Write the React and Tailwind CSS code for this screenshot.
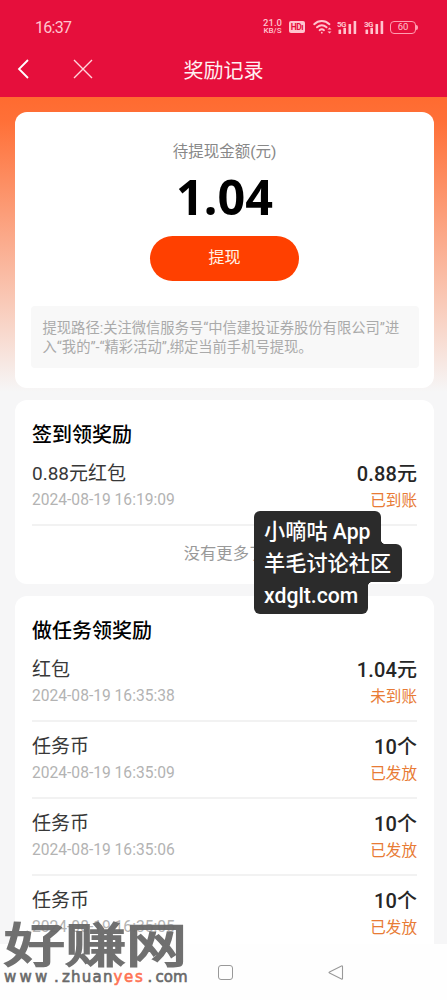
import React from "react";

const taskRecords = [
  { id: 1, name: "红包", time: "2024-08-19 16:35:38", amount: "1.04元", status: "未到账" },
  { id: 2, name: "任务币", time: "2024-08-19 16:35:09", amount: "10个", status: "已发放" },
  { id: 3, name: "任务币", time: "2024-08-19 16:35:06", amount: "10个", status: "已发放" },
  { id: 4, name: "任务币", time: "2024-08-19 16:35:05", amount: "10个", status: "已发放" },
];

function Signal({ label }) {
  return (
    <svg width="20" height="17" viewBox="0 0 20 17" fill="currentColor">
      <text x="0" y="7.500" fontSize="8" fontWeight="700" fontFamily="Roboto, sans-serif" textLength="9.500">
        {label}
      </text>
      <rect x="1.5" y="10.5" width="2.6" height="4.5" rx="0.6" />
      <rect x="6.4" y="8.8" width="2.6" height="6.2" rx="0.6" />
      <rect x="11.5" y="5" width="2.6" height="10" rx="0.6" />
      <rect x="16.6" y="2" width="2.6" height="13" rx="0.6" />
    </svg>
  );
}

function StatusBar() {
  return (
    <div className="flex h-[54px] items-center pl-[35px] pr-[29px] text-[#ffc4ce]">
      <span className="pt-[1px] text-[16px] leading-none tracking-[-0.7px]">16:37</span>
      <div className="ml-auto flex items-center">
        <div className="mr-[7px] flex w-[19px] flex-col items-center font-medium leading-none">
          <span className="text-[9.5px] leading-[8px]">21.0</span>
          <span className="text-[8px] leading-[8px]">KB/S</span>
        </div>
        <div className="mr-[8px] flex h-[12px] w-[16px] items-center justify-center rounded-[2px] bg-[#ffc4ce] text-[8.5px] font-bold leading-none tracking-[-0.5px] text-[#e60f3c]">
          HDı
        </div>
        <svg className="mr-[5px]" width="19" height="16" viewBox="0 0 19 16" fill="none" stroke="currentColor" strokeWidth="1.9" strokeLinecap="round">
          <path d="M1.2 5.2c4.4-4.2 10.800-4.200 15.200 0" />
          <path d="M4 8.300c2.900-2.600 6.700-2.600 9.600 0" />
          <path d="M6.600 11.200c1.400-1.200 3-1.200 4.400 0" />
          <circle cx="8.800" cy="13.700" r="0.900" fill="currentColor" stroke="none" />
          <path d="M16.500 8.500l2 2h-4zM16.500 14.500l2-2h-4z" fill="currentColor" stroke="none" />
        </svg>
        <div className="mr-[7px]">
          <Signal label="5G" />
        </div>
        <div className="mr-[6px]">
          <Signal label="3G" />
        </div>
        <div className="flex h-[13px] w-[26px] items-center justify-center rounded-[4px] border border-[#ff9db0] text-[9.5px] leading-none">
          60
        </div>
        <div className="h-[5px] w-[2px] rounded-r bg-[#ff9db0]" />
      </div>
    </div>
  );
}

function Header() {
  return (
    <header className="h-[97px] bg-[#e60f3c]">
      <StatusBar />
      <div className="grid h-[30px] grid-cols-[1fr_auto_1fr] items-center pl-[16px] text-white">
        <div className="flex items-center">
          <svg width="14" height="20" viewBox="0 0 14 20" fill="none" stroke="currentColor" strokeWidth="1.8">
            <path d="M12 1L3 10l9 9" />
          </svg>
          <svg className="ml-[43px] text-[#ffd5dc]" width="20" height="20" viewBox="0 0 20 20" fill="none" stroke="currentColor" strokeWidth="1.4">
            <path d="M1 1l18 18M19 1L1 19" />
          </svg>
        </div>
        <h1 className="-ml-[16px] pt-[3px] text-[20px] leading-none text-[#fff0f2]">奖励记录</h1>
      </div>
    </header>
  );
}

function Balance() {
  return (
    <section className="flex h-[276px] flex-col items-center rounded-[12px] bg-white px-4 pt-[30px]">
      <p className="text-[15.5px] leading-[20px] text-[#888]">待提现金额(元)</p>
      <p className="mt-[10px] h-[48px] font-['Noto_Sans'] text-[48.5px] font-bold leading-[48px] text-black">1.04</p>
      <button className="mt-[16px] h-[45px] w-[149px] rounded-full bg-[#ff4000] pb-[2px] text-[16px] text-[#fff3e6]">
        提现
      </button>
      <p className="mt-[25px] h-[62px] w-[388px] whitespace-nowrap rounded-[4px] bg-[#f8f8f8] px-[12px] pt-[13px] text-[14.3px] leading-[19px] text-[#aaa]">
        提现路径:关注微信服务号“中信建投证券股份有限公司”进
        <br />
        入“我的”-“精彩活动”,绑定当前手机号提现。
      </p>
    </section>
  );
}

function RecordRow({ record }) {
  return (
    <div className="flex h-[77px] justify-between border-b-2 border-[#f2f2f2] pt-[12px]">
      <div>
        <p className="text-[19px] leading-[26px] text-[#383838]">{record.name}</p>
        <p className="mt-[2px] text-[15.6px] leading-[22px] text-[#b3b3b3]">{record.time}</p>
      </div>
      <div className="text-right">
        <p className="text-[20px] font-medium leading-[26px] tracking-[0.1px] text-[#262626]">{record.amount}</p>
        <p className="mt-[3px] text-[15.6px] leading-[22px] text-[#e87b35]">{record.status}</p>
      </div>
    </div>
  );
}

function CommunityTag() {
  return (
    <div className="absolute left-[254px] top-[511px] flex flex-col items-start whitespace-nowrap text-[21.2px] font-medium leading-[32px] text-white">
      <div className="relative h-[33px] w-[127px] rounded-t-[6px] bg-[#2b2b2b] pl-[10px] pt-[5px]">
        小嘀咕 App
        <span className="absolute -right-[5px] bottom-0 h-[5px] w-[5px] bg-[radial-gradient(circle_at_100%_0,transparent_5px,#2b2b2b_5.5px)]" />
      </div>
      <div className="h-[38px] w-[148px] rounded-r-[6px] bg-[#2b2b2b] pl-[10px] pt-[4px]">羊毛讨论社区</div>
      <div className="relative h-[32px] w-[114px] rounded-b-[6px] bg-[#2b2b2b] pl-[10px] leading-[28px]">
        xdglt.com
        <span className="absolute -right-[5px] top-0 h-[5px] w-[5px] bg-[radial-gradient(circle_at_100%_100%,transparent_5px,#2b2b2b_5.5px)]" />
      </div>
    </div>
  );
}

function Watermark() {
  return (
    <div className="absolute left-[4px] top-[923px] w-[190px] text-[#696969]">
      <div className="h-[46px] origin-top scale-y-[0.76] whitespace-nowrap text-[61px] leading-[60px] opacity-95 [-webkit-text-stroke:2.6px_#696969]">
        好赚网
      </div>
      <div className="flex h-[17px] items-center whitespace-nowrap font-['DejaVu_Sans'] text-[15px] leading-[17px] [-webkit-text-stroke:0.6px_currentColor]">
        <span className="w-[50px] tracking-[3.2px]">www</span>
        <span className="w-[8px]">.</span>
        <span className="tracking-[1.2px]">zhuan</span>
        <span className="w-[34px] tracking-[1.6px] text-[#ff7354]">yes</span>
        <span className="w-[8px]">.</span>
        <span>com</span>
      </div>
    </div>
  );
}

function NavBar() {
  return (
    <nav className="flex h-[56px] items-center bg-[#fefefe] pl-[218px]">
      <div className="h-[15px] w-[15px] rounded-[3px] border border-[#999]" />
      <svg className="ml-[94px]" width="17" height="17" viewBox="0 0 17 17" fill="none" stroke="#999" strokeWidth="1.1" strokeLinejoin="round">
        <path d="M15.500 2.500v12q0 1-1 .5L2.500 9q-1-.5 0-1l12-6q1-.5 1 .5z" />
      </svg>
    </nav>
  );
}

function App() {
  return (
    <div className="relative h-[1000px] w-[447px] overflow-hidden bg-[#f6f6f6] font-[Roboto,'Noto_Sans_CJK_SC',sans-serif]">
      <Header />
      <main className="h-[847px] overflow-hidden bg-[linear-gradient(180deg,#ff6b30_0,#ff7038_25px,#f6f6f7_295px)] pl-[15px] pr-[13px] pt-[15px]">
        <Balance />

        <section className="mt-[12px] h-[184px] rounded-[12px] bg-white px-[17px] pt-[21px]">
          <h2 className="text-[20px] font-medium leading-[28px] text-black">签到领奖励</h2>
          <RecordRow
            record={{ name: "0.88元红包", time: "2024-08-19 16:19:09", amount: "0.88元", status: "已到账" }}
          />
          <p className="pt-[18px] text-center text-[16.3px] leading-[20px] text-[#999]">没有更多了</p>
        </section>

        <section className="mt-[12px] h-[400px] rounded-[12px] bg-white px-[17px] pt-[21px]">
          <h2 className="text-[20px] font-medium leading-[28px] text-black">做任务领奖励</h2>
          {taskRecords.map((record) => (
            <RecordRow key={record.id} record={record} />
          ))}
        </section>
      </main>
      <NavBar />

      <CommunityTag />
      <Watermark />
    </div>
  );
}

export default App;
